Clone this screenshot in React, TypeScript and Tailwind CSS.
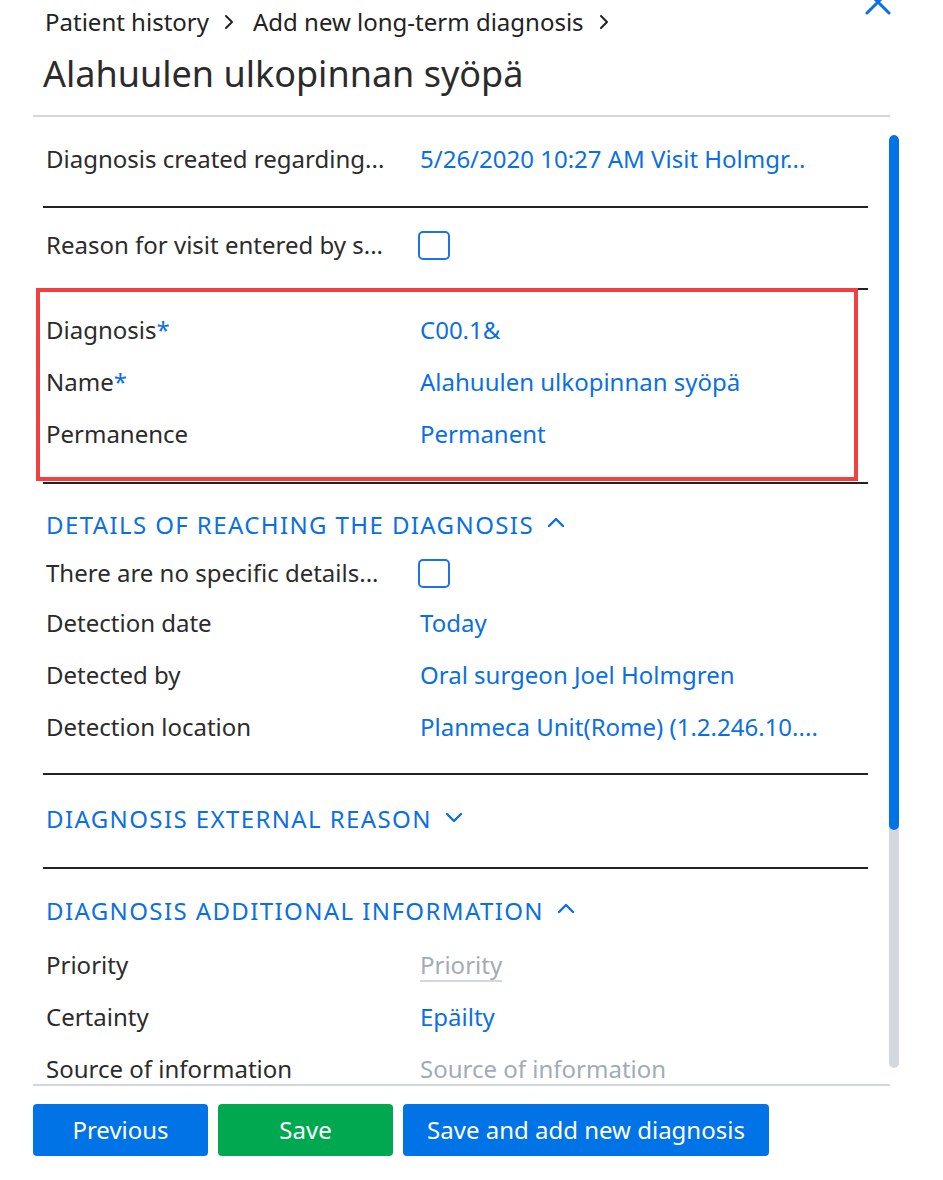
import React from "react";

const blue = "text-[#0b6fe4]";

const Field = ({
  label,
  children,
  h = "h-[52px]",
}: {
  label: React.ReactNode;
  children: React.ReactNode;
  h?: string;
}) => (
  <div className={`grid grid-cols-[374px_1fr] items-center ${h}`}>
    <div className="whitespace-nowrap text-[#2b2b2b]">{label}</div>
    <div className="min-w-0 whitespace-nowrap">{children}</div>
  </div>
);

const Checkbox = () => (
  <div className="-ml-[2px] w-[32px] h-[29px] rounded-[5px] border-2 border-[#1a73e8] bg-white" />
);

const Chevron = ({ up }: { up?: boolean }) => (
  <svg width="20" height="20" viewBox="0 0 20 20" className="inline-block ml-3 -mt-1">
    <path
      d={up ? "M3 13 L10 6 L17 13" : "M3 7 L10 14 L17 7"}
      fill="none"
      stroke="#0b6fe4"
      strokeWidth="2.4"
      strokeLinecap="round"
      strokeLinejoin="round"
    />
  </svg>
);

const Crumb = () => (
  <svg width="16" height="16" viewBox="0 0 16 16" className="ml-3 mr-4">
    <path d="M5 2 L11 8 L5 14" fill="none" stroke="#222" strokeWidth="2" strokeLinecap="round" strokeLinejoin="round" />
  </svg>
);

export default function App() {
  return (
    <div
      className="relative w-[943px] h-[1180px] overflow-hidden bg-white text-[24px]"
      style={{ fontFamily: '"Noto Sans", "Open Sans", sans-serif' }}
    >
      {/* close */}
      <svg className="absolute left-[864px] top-[-12px]" width="28" height="28" viewBox="0 0 28 28">
        <path d="M3 3 L25 25 M25 3 L3 25" stroke="#0b6fe4" strokeWidth="3" strokeLinecap="round" />
      </svg>

      {/* header */}
      <div className="pl-[45px] pt-[5px] h-[115px]">
        <div className="flex items-center h-[34px] text-[#222]">
          <span>Patient history</span>
          <Crumb />
          <span>Add new long-term diagnosis</span>
          <Crumb />
        </div>
        <div className="-ml-[2px] mt-[10px] text-[36px] leading-[50px] text-[#2b2b2b]">
          Alahuulen ulkopinnan syöpä
        </div>
      </div>

      <div className="ml-[33px] w-[857px] border-t-2 border-[#d3d8de]" />

      {/* body */}
      <div className="flex h-[967px]">
        <div className="ml-[36px] w-[832px] overflow-hidden">
          <div className="ml-[7px]">
            <div className="pl-[3px] pt-[16px] pb-[21px] border-b-2 border-[#222]">
              <Field label="Diagnosis created regarding...">
                <span className={blue}>5/26/2020 10:27 AM Visit Holmgr...</span>
              </Field>
            </div>

            <div className="pl-[3px] pt-[11px] pb-[17px] border-b-2 border-[#222]">
              <Field label="Reason for visit entered by s...">
                <Checkbox />
              </Field>
            </div>

            <div className="relative pl-[3px] pt-[14px] pb-[22px] border-b-2 border-[#222]">
              <div className="absolute left-[-7px] top-[-2px] w-[822px] h-[193px] border-4 border-[#f23f3f] pointer-events-none" />
              <Field label={<>Diagnosis<span className={blue}>*</span></>}>
                <span className={blue}>C00.1&amp;</span>
              </Field>
              <Field label={<>Name<span className={blue}>*</span></>}>
                <span className={blue}>Alahuulen ulkopinnan syöpä</span>
              </Field>
              <Field label="Permanence">
                <span className={blue}>Permanent</span>
              </Field>
            </div>

            <div className="pl-[3px] pt-[17px] pb-[20px] border-b-2 border-[#222]">
              <div className={`flex items-center h-[48px] tracking-[1.4px] ${blue}`}>
                DETAILS OF REACHING THE DIAGNOSIS
                <Chevron up />
              </div>
              <Field label="There are no specific details..." h="h-[48px]">
                <Checkbox />
              </Field>
              <Field label="Detection date">
                <span className={blue}>Today</span>
              </Field>
              <Field label="Detected by">
                <span className={blue}>Oral surgeon Joel Holmgren</span>
              </Field>
              <Field label="Detection location">
                <span className={blue}>Planmeca Unit(Rome) (1.2.246.10....</span>
              </Field>
            </div>

            <div className="pl-[3px] h-[94px] pb-[4px] flex items-center border-b-2 border-[#222]">
              <div className={`flex items-center tracking-[1.4px] ${blue}`}>
                DIAGNOSIS EXTERNAL REASON
                <Chevron />
              </div>
            </div>

            <div className="pl-[3px] pt-[18px]">
              <div className={`flex items-center h-[48px] mb-[4px] tracking-[1.4px] ${blue}`}>
                DIAGNOSIS ADDITIONAL INFORMATION
                <Chevron up />
              </div>
              <Field label="Priority">
                <span className="inline-block text-[#a3abb6] border-b-2 border-[#d3d8de] leading-[30px]">Priority</span>
              </Field>
              <Field label="Certainty">
                <span className={blue}>Epäilty</span>
              </Field>
              <Field label="Source of information">
                <span className="text-[#a3abb6]">Source of information</span>
              </Field>
            </div>
          </div>
        </div>

        {/* scrollbar */}
        <div className="ml-[21px] mt-[18px] w-[10px] h-[933px] rounded-full bg-[#d3d8de] overflow-hidden">
          <div className="h-[695px] rounded-full bg-[#0073e6]" />
        </div>
      </div>

      <div className="ml-[33px] w-[857px] border-t-2 border-[#d3d8de]" />

      {/* buttons */}
      <div className="flex gap-[10px] pl-[33px] pt-[18px]">
        <button className="w-[175px] h-[52px] rounded-[4px] bg-[#0073e6] text-white">Previous</button>
        <button className="w-[175px] h-[52px] rounded-[4px] bg-[#00a94f] text-white">Save</button>
        <button className="w-[366px] h-[52px] rounded-[4px] bg-[#0073e6] text-white">Save and add new diagnosis</button>
      </div>
    </div>
  );
}
